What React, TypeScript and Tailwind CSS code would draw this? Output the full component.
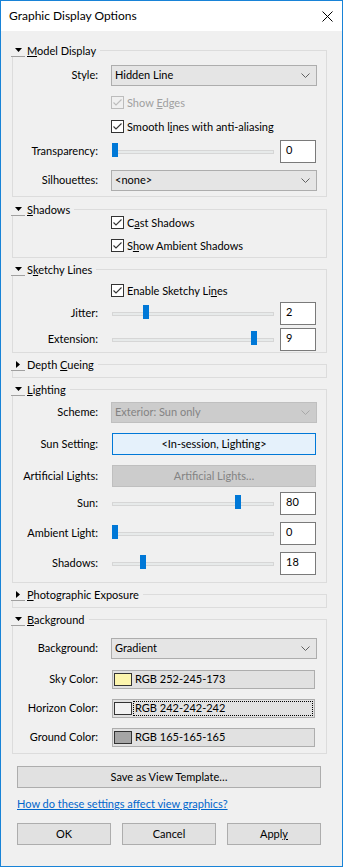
import React from 'react'

type Slider = { label: string; value: string; thumb: number }

function TriDown() {
	return (
		<svg width="7" height="4" viewBox="0 0 7 4">
			<path d="M0 0 H7 L3.5 4 Z" fill="#000" />
		</svg>
	)
}

function TriRight() {
	return (
		<svg width="4" height="7" viewBox="0 0 4 7">
			<path d="M0 0 V7 L4 3.5 Z" fill="#000" />
		</svg>
	)
}

function Chevron({ color = '#606060' }: { color?: string }) {
	return (
		<svg width="9" height="5" viewBox="0 0 9 5">
			<path d="M0.5 0.5 L4.5 4.5 L8.5 0.5" fill="none" stroke={color} strokeWidth="1" />
		</svg>
	)
}

function Check({ disabled }: { disabled?: boolean }) {
	const c = disabled ? '#bcbcbc' : '#333333'
	return (
		<div className={`flex h-[13px] w-[13px] shrink-0 items-center justify-center border ${disabled ? 'border-[#bcbcbc] bg-[#f0f0f0]' : 'border-[#333333] bg-white'}`}>
			<svg width="11" height="11" viewBox="0 0 11 11">
				<path d="M1.5 5.5 L4 8 L9.5 2.5" fill="none" stroke={c} strokeWidth="1.1" />
			</svg>
		</div>
	)
}

function Group({
	title,
	open = true,
	className = '',
	children,
}: {
	title: React.ReactNode
	open?: boolean
	className?: string
	children?: React.ReactNode
}) {
	return (
		<div className="flex flex-col">
			<div className="flex h-[13px] items-stretch">
				<div className="flex w-[14px] shrink-0 items-center justify-center border-b border-[#a0a0a0]">
					{open ? <TriDown /> : <TriRight />}
				</div>
				<span className="ml-[2px] whitespace-nowrap leading-[13px]">{title}</span>
				<div className="ml-[4px] mt-[6px] flex-1 border-t border-r border-[#dcdcdc]" />
			</div>
			<div className={`ml-px border-x border-b border-[#dcdcdc] ${className}`}>{children}</div>
		</div>
	)
}

function Row({ label, className = '', children }: { label?: string; className?: string; children: React.ReactNode }) {
	return (
		<div className={`grid grid-cols-[85px_1fr] items-center gap-x-[13px] pr-[9px] ${className}`}>
			<div className="whitespace-nowrap text-right">{label}</div>
			<div className="flex items-center">{children}</div>
		</div>
	)
}

function Dropdown({ value, disabled }: { value: string; disabled?: boolean }) {
	return (
		<div
			className={`flex h-[21px] flex-1 items-center justify-between border pl-[3px] pr-[6px] ${
				disabled ? 'border-[#bfbfbf] bg-[#cccccc] text-[#838383]' : 'border-[#adadad] bg-[#e5e5e5]'
			}`}
		>
			<span>{value}</span>
			<Chevron color={disabled ? '#a8a8a8' : '#606060'} />
		</div>
	)
}

function CheckRow({ disabled, children, className = '' }: { disabled?: boolean; children: React.ReactNode; className?: string }) {
	return (
		<Row className={`h-[13px] leading-[13px] ${className}`}>
			<div className="flex h-[13px] items-center gap-[3px]">
				<Check disabled={disabled} />
				<span className={`whitespace-nowrap leading-[13px] ${disabled ? 'text-[#a0a0a0]' : ''}`}>{children}</span>
			</div>
		</Row>
	)
}

function SliderRow({ s, className = '' }: { s: Slider; className?: string }) {
	return (
		<Row label={s.label} className={`h-[23px] ${className}`}>
			<div className="relative flex h-[23px] flex-1 items-center">
				<div className="ml-px h-[4px] flex-1 border border-[#d6d6d6] bg-[#e7eaea]" />
				<div className="absolute top-[3px] h-[14px] w-[6px] bg-[#0078d7]" style={{ left: s.thumb }} />
			</div>
			<div className="ml-[6px] mr-px flex h-[23px] w-[36px] items-center border border-[#7a7a7a] bg-white pb-[2px] pl-[5px]">
				{s.value}
			</div>
		</Row>
	)
}

function ColorButton({ rgb, label, focus, className = '' }: { rgb: string; label: string; focus?: boolean; className?: string }) {
	return (
		<Row label={label} className={`h-[19px] ${className}`}>
			<div className="ml-px mr-[2px] flex h-[19px] flex-1 items-center border border-[#adadad] bg-[#e1e1e1] pl-px pr-[1px]">
				<div className="h-[13px] w-[18px] shrink-0 border border-[#333333]" style={{ background: rgb }} />
				<span className={`ml-px flex h-[15px] flex-1 items-center pl-px ${focus ? 'border border-dotted border-black' : 'border border-transparent'}`}>
					RGB {rgb.replace('rgb(', '').replace(')', '').split(',').join('-')}
				</span>
			</div>
		</Row>
	)
}

function Btn({ children, className = '' }: { children: React.ReactNode; className?: string }) {
	return (
		<div className={`flex h-[22px] items-center justify-center border border-[#adadad] bg-[#e1e1e1] ${className}`}>{children}</div>
	)
}

export default function App() {
	return (
		<div className="h-[867px] w-[343px] font-['Lato',sans-serif] text-[11px] text-black">
			<div className="flex h-[867px] w-[343px] flex-col border border-[#1883d7] bg-[#f0f0f0]">
				<div className="flex h-[30px] shrink-0 items-center justify-between bg-white pl-[8px] pr-[9px]">
					<span className="text-[12px]">Graphic Display Options</span>
					<svg width="11" height="11" viewBox="0 0 11 11">
						<path d="M0.5 0.5 L10.5 10.5 M10.5 0.5 L0.5 10.5" stroke="#000" strokeWidth="1" />
					</svg>
				</div>

				<div className="flex flex-col pl-[10px] pr-[15px]">
					<div className="mt-[13px]">
						<Group title={<><u>M</u>odel Display</>} className="pb-[5px]">
							<Row label="Style:" className="mt-[8px]">
								<Dropdown value="Hidden Line" />
							</Row>
							<CheckRow disabled className="mt-[10px]">
								Show <u>E</u>dges
							</CheckRow>
							<CheckRow className="mt-[11px]">
								Smooth l<u>i</u>nes with anti-aliasing
							</CheckRow>
							<SliderRow s={{ label: 'Transparency:', value: '0', thumb: 1 }} className="mt-[7px]" />
							<Row label="Silhouettes:" className="mt-[7px]">
								<Dropdown value="<none>" />
							</Row>
						</Group>
					</div>

					<div className="mt-[6px]">
						<Group title={<><u>S</u>hadows</>} className="pb-[5px]">
							<CheckRow>
								C<u>a</u>st Shadows
							</CheckRow>
							<CheckRow className="mt-[10px]">
								S<u>h</u>ow Ambient Shadows
							</CheckRow>
						</Group>
					</div>

					<div className="mt-[5px]">
						<Group title={<>S<u>k</u>etchy Lines</>} className="pb-px">
							<CheckRow className="mt-[8px]">
								Enable Sketchy Li<u>n</u>es
							</CheckRow>
							<SliderRow s={{ label: 'Jitter:', value: '2', thumb: 32 }} className="mt-[5px]" />
							<SliderRow s={{ label: 'Extension:', value: '9', thumb: 140 }} className="mt-[3px]" />
						</Group>
					</div>

					<div className="mt-[5px]">
						<Group title={<>Depth <u>C</u>ueing</>} open={false} className="h-[7px]" />
					</div>

					<div className="mt-[5px]">
						<Group title={<><u>L</u>ighting</>} className="pb-[7px]">
							<Row label="Scheme:" className="mt-[6px]">
								<Dropdown value="Exterior: Sun only" disabled />
							</Row>
							<Row label="Sun Setting:" className="mt-[10px]">
								<div className="ml-px mr-px flex h-[22px] flex-1 items-center justify-center border border-[#0078d7] bg-[#e5f1fb]">
									&lt;In-session, Lighting&gt;
								</div>
							</Row>
							<Row label="Artificial Lights:" className="mt-[10px]">
								<div className="ml-px mr-px flex h-[22px] flex-1 items-center justify-center border border-[#bfbfbf] bg-[#cccccc] text-[#838383]">
									Artificial Lights…
								</div>
							</Row>
							<SliderRow s={{ label: 'Sun:', value: '80', thumb: 124 }} className="mt-[5px]" />
							<SliderRow s={{ label: 'Ambient Light:', value: '0', thumb: 1 }} className="mt-[7px]" />
							<SliderRow s={{ label: 'Shadows:', value: '18', thumb: 29 }} className="mt-[7px]" />
						</Group>
					</div>

					<div className="mt-[5px]">
						<Group title={<><u>P</u>hotographic Exposure</>} open={false} className="h-[7px]" />
					</div>

					<div className="mt-[5px]">
						<Group title={<><u>B</u>ackground</>} className="pb-[6px]">
							<Row label="Background:" className="mt-[12px]">
								<Dropdown value="Gradient" />
							</Row>
							<ColorButton label="Sky Color:" rgb="rgb(252,245,173)" className="mt-[11px]" />
							<ColorButton label="Horizon Color:" rgb="rgb(242,242,242)" focus className="mt-[10px]" />
							<ColorButton label="Ground Color:" rgb="rgb(165,165,165)" className="mt-[10px]" />
						</Group>
					</div>
				</div>

				<div className="flex flex-col pl-[16px] pr-[21px]">
					<Btn className="mt-[12px]">Save as View Template…</Btn>
					<a className="mt-[9px] h-[14px] leading-[14px] text-[#0066cc] underline">How do these settings affect view graphics?</a>
					<div className="mt-[12px] flex gap-[11px]">
						<Btn className="w-[94px]">OK</Btn>
						<Btn className="w-[94px]">Cancel</Btn>
						<Btn className="w-[94px]">
							Appl<u>y</u>
						</Btn>
					</div>
				</div>
			</div>
		</div>
	)
}
